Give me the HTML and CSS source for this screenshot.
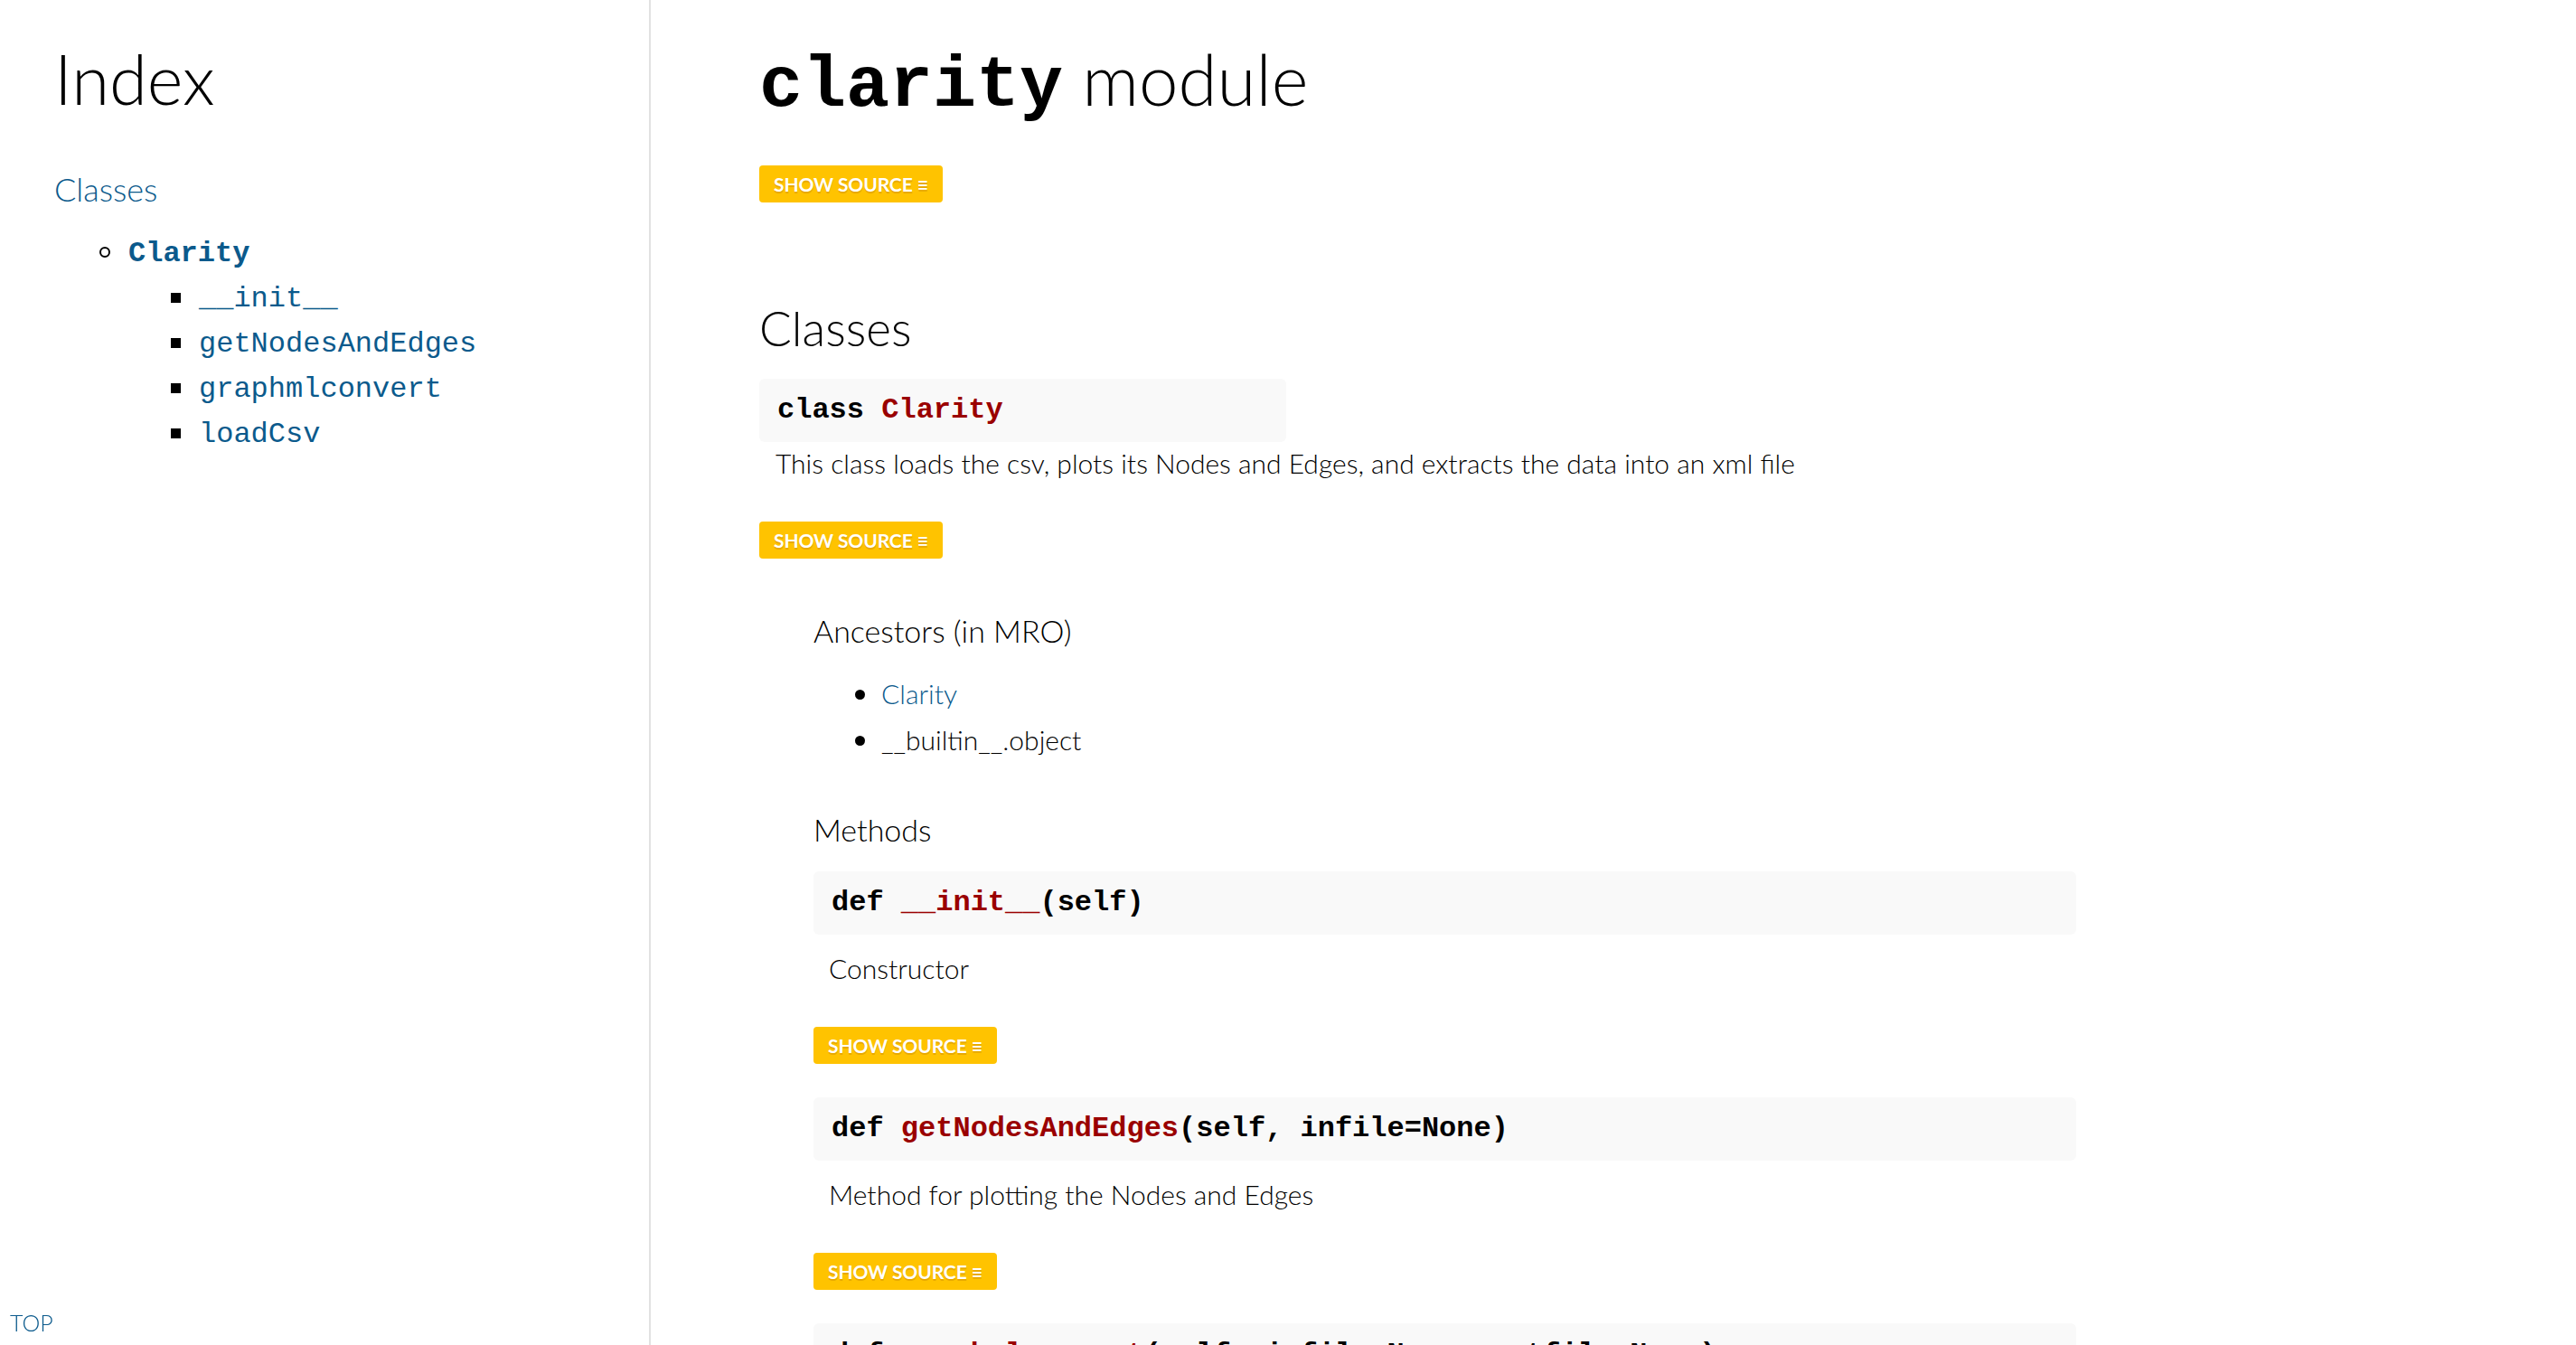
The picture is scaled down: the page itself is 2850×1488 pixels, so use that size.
FILE: index.html
```html
<!DOCTYPE html>
<html lang="en">
<head>
<meta charset="utf-8">
<title>clarity API documentation</title>
<link rel="stylesheet" href="styles.css">
</head>
<body>
<div class="container">
  <nav class="sidebar">
    <h1 class="index-title">Index</h1>
    <div class="index-set">
      <h3 class="set-title"><a href="#header-classes">Classes</a></h3>
      <ul class="class-list">
        <li class="class-item"><a class="class-name" href="#clarity.Clarity">Clarity</a>
          <ul class="method-list">
            <li class="method-item"><a href="#clarity.Clarity.__init__">__init__</a></li>
            <li class="method-item"><a href="#clarity.Clarity.getNodesAndEdges">getNodesAndEdges</a></li>
            <li class="method-item"><a href="#clarity.Clarity.graphmlconvert">graphmlconvert</a></li>
            <li class="method-item"><a href="#clarity.Clarity.loadCsv">loadCsv</a></li>
          </ul>
        </li>
      </ul>
    </div>
    <a class="top-link" href="#">TOP</a>
  </nav>

  <main class="content">
    <header class="intro">
      <h1 class="title"><span class="mono">clarity</span> module</h1>
      <p class="source-link"><a href="#">Show source &equiv;</a></p>
    </header>

    <section class="items">
      <h2 class="section-title" id="header-classes">Classes</h2>
      <div class="item">
        <p class="name class-def">class <span class="ident">Clarity</span></p>
        <div class="desc class-desc"><p>This class loads the csv, plots its Nodes and Edges, and extracts the data into an xml file</p></div>
        <p class="source-link"><a href="#">Show source &equiv;</a></p>

        <div class="class-body">
          <h3 class="sub-title first">Ancestors (in MRO)</h3>
          <ul class="mro-list">
            <li><a href="#clarity.Clarity">Clarity</a></li>
            <li>__builtin__.object</li>
          </ul>

          <h3 class="sub-title">Methods</h3>

          <div class="method">
            <div class="name def">def <span class="ident">__init__</span>(self)</div>
            <div class="desc method-desc"><p>Constructor</p></div>
            <p class="source-link"><a href="#">Show source &equiv;</a></p>
          </div>

          <div class="method">
            <div class="name def">def <span class="ident">getNodesAndEdges</span>(self, infile=None)</div>
            <div class="desc method-desc"><p>Method for plotting the Nodes and Edges</p></div>
            <p class="source-link"><a href="#">Show source &equiv;</a></p>
          </div>

          <div class="method">
            <div class="name def">def <span class="ident">graphmlconvert</span>(self, infile=None, outfile=None)</div>
            <div class="desc method-desc"><p>Method for converting the data into a graphml file</p></div>
            <p class="source-link"><a href="#">Show source &equiv;</a></p>
          </div>
        </div>
      </div>
    </section>
  </main>
</div>
</body>
</html>
```

FILE: styles.css
```css
html, body {
  margin: 0;
  padding: 0;
}

body {
  background: #fff;
  color: #000;
  font-family: Lato, "Noto Sans", sans-serif;
  font-weight: 300;
  font-size: 30px;
  line-height: 51px;
  overflow: hidden;
}

a {
  color: #0b5a8c;
  text-decoration: none;
}

.container {
  display: flex;
  min-height: 1488px;
}

/* ---------- sidebar ---------- */
.sidebar {
  flex: none;
  width: 658px;
  padding: 43px 0 0 60px;
  border-right: 2px solid #e2e2e2;
}

.index-title {
  margin: 0;
  font-size: 76px;
  line-height: 88px;
  font-weight: 300;
  color: #000;
}

.set-title {
  margin: 54px 0 0;
  font-size: 36px;
  line-height: 48px;
  font-weight: 300;
}

.class-list,
.method-list {
  list-style: none;
  margin: 0;
  padding: 0;
}

.class-list {
  margin-top: 23px;
  padding-left: 82px;
}

.method-list {
  padding-left: 78px;
}

.class-item,
.method-item {
  font-family: "Liberation Mono", "Courier New", monospace;
  font-size: 32px;
  line-height: 50px;
}

.class-name {
  font-weight: 700;
}

.class-item::before {
  content: "";
  display: inline-block;
  box-sizing: border-box;
  width: 12px;
  height: 12px;
  margin: 0 20px 0 -32px;
  border: 2px solid #000;
  border-radius: 50%;
  vertical-align: 4px;
}

.method-item::before {
  content: "";
  display: inline-block;
  width: 11px;
  height: 11px;
  margin: 0 20px 0 -31px;
  background: #000;
  vertical-align: 4px;
}

.top-link {
  position: fixed;
  left: 11px;
  bottom: 8px;
  font-size: 25px;
  line-height: 34px;
  font-weight: 300;
}

/* ---------- content ---------- */
.content {
  flex: none;
  width: 1457px;
  padding: 43px 0 0 120px;
}

.title {
  margin: 0;
  font-size: 78px;
  line-height: 88px;
  font-weight: 300;
  color: #000;
}

.mono,
.name {
  font-family: "Liberation Mono", "Courier New", monospace;
  font-weight: 700;
}

.title .mono {
  font-size: 80px;
  line-height: 60px;
}

.source-link {
  display: flex;
  margin: 52px 0 0;
}

.source-link a {
  display: block;
  height: 41px;
  padding: 0 16px;
  border-radius: 4px;
  background: #ffc300;
  color: #fff;
  font-size: 21px;
  line-height: 42px;
  font-weight: 700;
  letter-spacing: -0.1px;
  text-transform: uppercase;
  text-shadow: 0 2px 0 #e8a900;
}

.section-title {
  margin: 107px 0 0;
  font-size: 53px;
  line-height: 64px;
  font-weight: 300;
  color: #000;
}

.name {
  margin: 0;
  padding: 17px 20px;
  font-size: 32px;
  line-height: 36px;
  color: #000;
  background: #f9f9f9;
  border-radius: 6px;
}

.class-def {
  margin-top: 24px;
  width: fit-content;
  min-width: 40%;
  box-sizing: border-box;
}

.ident {
  color: #9a0000;
}

.desc p {
  margin: 0;
  line-height: 44px;
}

.class-desc {
  padding-left: 18px;
  margin-top: 1px;
}

.class-desc + .source-link {
  margin-top: 43px;
}

.class-body {
  padding-left: 60px;
}

.sub-title {
  margin: 50px 0 0;
  font-size: 34px;
  line-height: 48px;
  font-weight: 300;
  color: #000;
}

.sub-title.first {
  margin-top: 56px;
}

.mro-list {
  list-style: none;
  margin: 20px 0 0;
  padding: 0 0 0 80px;
}

.mro-list li::before {
  content: "";
  display: inline-block;
  width: 11px;
  height: 11px;
  margin: 0 18px 0 -34px;
  border-radius: 50%;
  background: #000;
  vertical-align: 5px;
}

.method {
  margin-top: 22px;
}

.method + .method {
  margin-top: 37px;
}

.method-desc {
  padding-left: 17px;
  margin-top: 15px;
}

.method-desc + .source-link {
  margin-top: 43px;
}
```
